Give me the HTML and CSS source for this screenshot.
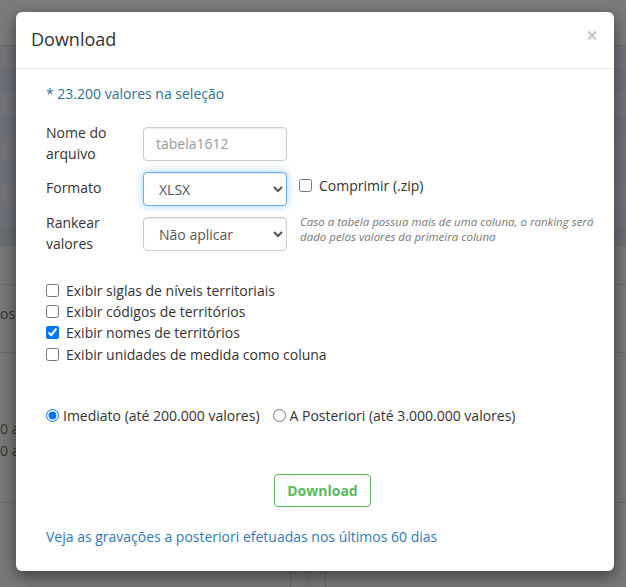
FILE: index.html
```html
<!DOCTYPE html>
<html lang="pt">
<head>
<meta charset="utf-8">
<title>Download</title>
<link rel="stylesheet" href="styles.css">
</head>
<body>
<div class="page">
  <div class="bg-top"></div>
  <div class="bg-rows">
    <div class="bg-row a"></div><div class="bg-row b"></div><div class="bg-row a"></div><div class="bg-row b"></div>
    <div class="bg-row a"></div><div class="bg-row b"></div><div class="bg-row a"></div><div class="bg-row b"></div>
  </div>
  <div class="bg-band"></div>
  <div class="bg-plain h40"></div>
  <div class="bg-plain h62"><span class="bg-text">os e</span></div>
  <div class="bg-plain h140"><span class="bg-text t2">0 a<br>0 a</span></div>
  <div class="bg-bottom"><div class="vline"></div><div class="vstrip"></div><div class="vline"></div></div>
</div>

<div class="modal">
  <div class="modal-header">
    <h4 class="modal-title">Download</h4>
    <span class="close">×</span>
  </div>
  <div class="modal-body">
    <p class="info">* 23.200 valores na seleção</p>

    <div class="form">
      <div class="form-row">
        <label class="control-label">Nome do arquivo</label>
        <input class="form-control" type="text" placeholder="tabela1612">
      </div>
      <div class="form-row">
        <label class="control-label">Formato</label>
        <select class="form-control focused"><option>XLSX</option></select>
        <label class="check inline"><input type="checkbox"> Comprimir (.zip)</label>
      </div>
      <div class="form-row">
        <label class="control-label">Rankear valores</label>
        <select class="form-control"><option>Não aplicar</option></select>
        <p class="help">Caso a tabela possua mais de uma coluna, o ranking será<br>dado pelos valores da primeira coluna</p>
      </div>
    </div>

    <div class="checks">
      <label class="check"><input type="checkbox"> Exibir siglas de níveis territoriais</label>
      <label class="check"><input type="checkbox"> Exibir códigos de territórios</label>
      <label class="check"><input type="checkbox" checked> Exibir nomes de territórios</label>
      <label class="check"><input type="checkbox"> Exibir unidades de medida como coluna</label>
    </div>

    <div class="radios">
      <label class="radio"><input type="radio" name="modo" checked>Imediato (até 200.000 valores)</label>
      <label class="radio"><input type="radio" name="modo">A Posteriori (até 3.000.000 valores)</label>
    </div>

    <div class="actions">
      <button class="btn-download" type="button">Download</button>
    </div>

    <a class="link" href="#">Veja as gravações a posteriori efetuadas nos últimos 60 dias</a>
  </div>
</div>
</body>
</html>
```

FILE: styles.css
```css
* { box-sizing: border-box; }
html, body { margin: 0; padding: 0; }
body {
  font-family: "Open Sans", "Noto Sans", sans-serif;
  font-size: 14px;
  line-height: 1.42857;
  color: #333;
  background: #7a7a7a;
  width: 626px;
  height: 587px;
  overflow: hidden;
  position: relative;
}

/* background page behind overlay */
.page { display: flex; flex-direction: column; height: 587px; }
.bg-top { height: 46px; background: #7b7b7b; border-bottom: 1px solid #6c6c6c; }
.bg-rows { display: flex; flex-direction: column; border-bottom: 1px solid #666; }
.bg-row { height: 23px; }
.bg-row.a { background: #727379; }
.bg-row.b { background: #6e7077; }
.bg-band { height: 16px; background: #6b6e72; border-bottom: 1px solid #707070; }
.bg-plain { background: #787878; border-bottom: 1px solid #6a6a6a; position: relative; }
.h40 { height: 38px; }
.h62 { height: 68px; }
.h140 { height: 150px; }
.bg-text { position: absolute; left: 0; top: 18px; color: #333; font-size: 14px; line-height: 22px; }
.bg-text.t2 { top: 65px; }
.bg-bottom { flex: 1; background: #787878; display: flex; align-items: stretch; padding-left: 290px; }
.vline { width: 1px; background: #666; }
.vstrip { width: 34px; background: #737373; border-left: 14px solid #787878; border-right: 14px solid #787878; }

/* modal */
.modal {
  position: absolute;
  left: 16px;
  top: 12px;
  width: 598px;
  height: 559px;
  background: #fff;
  border-radius: 6px;
  box-shadow: 0 5px 15px rgba(0, 0, 0, 0.5);
  overflow: hidden;
}
.modal-header {
  padding: 15px;
  border-bottom: 1px solid #e5e5e5;
  display: flex;
  justify-content: space-between;
  align-items: flex-start;
}
.modal-title {
  margin: 0;
  font-size: 18px;
  font-weight: 400;
  line-height: 1.42857;
  color: #333;
}
.close {
  font-size: 21px;
  font-weight: 700;
  line-height: 1;
  color: #000;
  opacity: 0.2;
  margin-top: -2px;
  margin-right: 1px;
}
.modal-body { padding: 15px 30px; }
.info { margin: 0 0 19px; color: #31708f; line-height: 20px; }

.form { display: flex; flex-direction: column; gap: 3px; }
.form-row { display: flex; align-items: center; min-height: 42px; }
.control-label { width: 97px; line-height: 20.5px; padding-right: 20px; flex: none; }
.form-control {
  width: 144px;
  height: 34px;
  padding: 6px 12px;
  font-family: inherit;
  font-size: 14px;
  color: #555;
  background: #fff;
  border: 1px solid #ccc;
  border-radius: 4px;
  box-shadow: inset 0 1px 1px rgba(0, 0, 0, 0.075);
  flex: none;
}
.form-control::placeholder { color: #999; }
select.form-control { padding: 6px 8px 6px 11px; }
.form-control.focused {
  border-color: #66afe9;
  outline: 0;
  box-shadow: inset 0 1px 1px rgba(0, 0, 0, .075), 0 0 8px rgba(102, 175, 233, .6);
}
.check { display: flex; align-items: center; gap: 4px; line-height: 21.3px; }
.check input { margin: 0 3px 0 0; width: 13px; height: 13px; }
.check.inline { margin-left: 12px; margin-top: -6px; }
.help {
  margin: 0 0 0 13px;
  align-self: flex-start;
  padding-top: 1px;
  font-size: 11.5px;
  font-style: italic;
  color: #777;
  line-height: 15px;
  white-space: nowrap;
}

.checks { margin-top: 25px; display: flex; flex-direction: column; }
.radios { margin-top: 41px; display: flex; gap: 13px; }
.radio { display: flex; align-items: center; line-height: 20px; }
.radio input { margin: 0 4px 0 0; width: 13px; height: 13px; }

.actions { margin-top: 48px; display: flex; justify-content: center; padding-left: 15px; }
.btn-download {
  height: 33px;
  width: 97px;
  padding: 0;
  font-family: inherit;
  font-size: 14px;
  font-weight: 700;
  color: #5cb85c;
  background: #fff;
  border: 1px solid #5cb85c;
  border-radius: 4px;
}
.link {
  display: block;
  margin-top: 20px;
  color: #337ab7;
  text-decoration: none;
  line-height: 20px;
}
```
